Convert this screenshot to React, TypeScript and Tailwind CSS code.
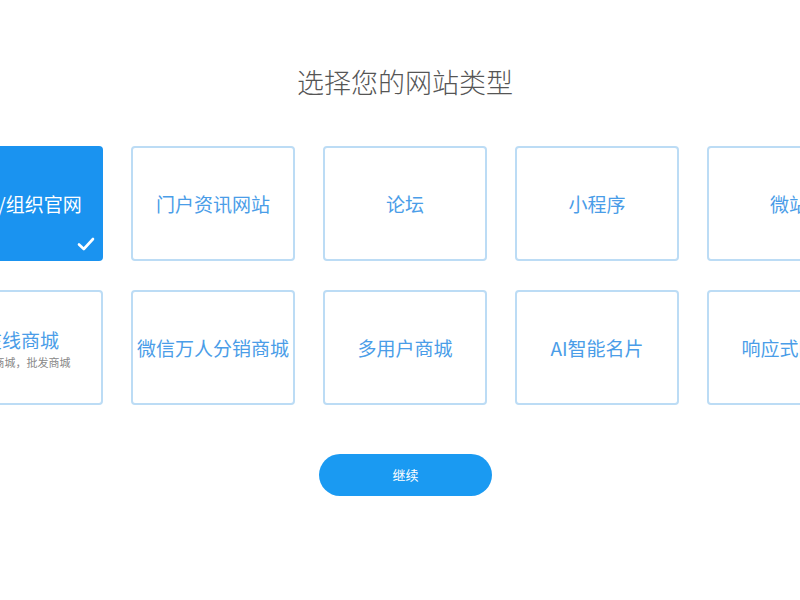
const cards: { title: string; sub?: string; selected?: boolean }[] = [
  { title: "企业/组织官网", selected: true },
  { title: "门户资讯网站" },
  { title: "论坛" },
  { title: "小程序" },
  { title: "微站" },
  { title: "在线商城", sub: "零售商城，批发商城" },
  { title: "微信万人分销商城" },
  { title: "多用户商城" },
  { title: "AI智能名片" },
  { title: "响应式网站" },
];

function Check() {
  return (
    <svg className="absolute right-[8px] bottom-[10px]" width="18" height="14" viewBox="0 0 18 14" fill="none">
      <path d="M2 7.5 L6.8 12 L16 2" stroke="white" strokeWidth="2.6" strokeLinecap="round" strokeLinejoin="round" />
    </svg>
  );
}

export default function App() {
  return (
    <div
      className="h-[600px] w-[800px] overflow-hidden bg-white"
      style={{ fontFamily: '"Noto Sans CJK SC", "Noto Sans", sans-serif' }}
    >
      <h1 className="pt-[63px] pl-[10px] text-center text-[27px] leading-[38px] font-light text-[#555]">选择您的网站类型</h1>
      <div className="mt-[45px] flex justify-center pl-[11px]">
        <div className="grid w-[933px] shrink-0 grid-cols-[repeat(5,164px)] gap-x-[28px] gap-y-[29px]">
          {cards.map((c) => (
            <div
              key={c.title}
              className={
                c.selected
                  ? "relative flex h-[115px] flex-col items-center justify-center rounded-[4px] bg-[#1a93f0] text-white"
                  : "relative flex h-[115px] flex-col items-center justify-center rounded-[4px] border-2 border-[#bcdcf5] bg-white text-[#4a9de8]"
              }
            >
              <div className="text-[19px] leading-[26px] whitespace-nowrap">{c.title}</div>
              {c.sub && <div className="mt-[2px] text-[11px] leading-[14px] text-[#888]">{c.sub}</div>}
              {c.selected && <Check />}
            </div>
          ))}
        </div>
      </div>
      <div className="mt-[49px] flex justify-center pl-[11px]">
        <button className="h-[42px] w-[173px] rounded-full bg-[#1a9af2] text-[13px] text-white">继续</button>
      </div>
    </div>
  );
}
